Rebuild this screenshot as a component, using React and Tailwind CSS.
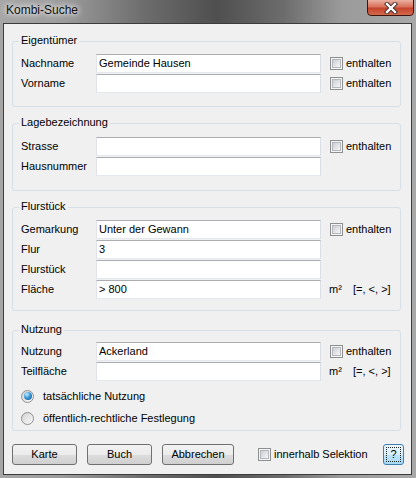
import React from 'react';

const font = "font-['Liberation_Sans',Arial,sans-serif]";

function Checkbox() {
  return (
    <span className="w-[13px] h-[13px] shrink-0 border border-[#8e8f8f] bg-[#f4f4f4] p-[1px] flex">
      <span className="flex-1 border border-[#b4b8bd] bg-gradient-to-br from-[#cbced3] to-[#f7f7f7]" />
    </span>
  );
}

function Radio({ checked }) {
  return (
    <span className="w-[13px] h-[13px] shrink-0 rounded-full border border-[#8e8f8f] bg-gradient-to-br from-[#d2d2d2] to-[#fafafa] flex items-center justify-center">
      {checked && (
        <span className="w-[8px] h-[8px] rounded-full bg-[radial-gradient(circle_at_35%_30%,#c8ecff_0%,#3a9ad9_45%,#0e4f86_100%)]" />
      )}
    </span>
  );
}

function Field({ value }) {
  return (
    <div className="w-[225px] h-[19px] shrink-0 bg-white border border-t-[#abadb3] border-l-[#e2e3ea] border-r-[#dbdfe6] border-b-[#e3e9ef] pl-[2px] leading-[17px] whitespace-nowrap">
      {value}
    </div>
  );
}

function Enthalten() {
  return (
    <div className="flex items-center ml-[9px]">
      <Checkbox />
      <span className="ml-[3px]">enthalten</span>
    </div>
  );
}

function Area() {
  return (
    <div className="flex items-center ml-[8px]">
      <span className="w-[24px]">m²</span>
      <span>[=, &lt;, &gt;]</span>
    </div>
  );
}

function Row({ label, value, extra }) {
  return (
    <div className="flex items-center h-[19px]">
      <span className="w-[75px] shrink-0">{label}</span>
      <Field value={value} />
      {extra}
    </div>
  );
}

function Group({ title, className, children }) {
  return (
    <div className={`relative w-[389px] border border-[#d5dfe5] rounded-[3px] pl-[8px] ${className}`}>
      <span className="absolute left-[6px] top-[-8px] px-[2px] bg-[#f0f0f0] leading-[13px]">{title}</span>
      {children}
    </div>
  );
}

function Button({ children, className }) {
  return (
    <div className={`h-[21px] flex items-center justify-center rounded-[3px] border border-[#707070] bg-[linear-gradient(#f2f2f2_0%,#ebebeb_50%,#dddddd_50%,#cfcfcf_100%)] ${className}`}>
      {children}
    </div>
  );
}

export default function App() {
  return (
    <div className={`w-[416px] h-[478px] flex flex-col text-[11px] text-black ${font} bg-[linear-gradient(90deg,#a6a6a6_0%,#9c9c9c_15%,#6c6c6c_35%,#4f4f4f_52%,#6c6c6c_68%,#9a9a9a_82%,#a8a8a8_100%)]`}>
      {/* title bar */}
      <div className="h-[23px] flex justify-between items-start">
        <span className="pl-[6px] pt-[3px] text-[12px] leading-[15px] text-[#111] [text-shadow:0_0_5px_#fff,0_0_8px_#fff]">Kombi-Suche</span>
        <div className="w-[47px] h-[17px] mr-[2px] mt-[-1px] rounded-b-[4px] border border-[#3d1510] bg-[linear-gradient(#eab0a2_0%,#d8705a_45%,#c4432c_55%,#d46a4c_100%)] flex items-center justify-center">
          <svg width="14" height="12" viewBox="0 0 14 12">
            <path d="M3 2 L11 10 M11 2 L3 10" stroke="#3a2a2a" strokeWidth="4.2" strokeLinecap="square" />
            <path d="M3 2 L11 10 M11 2 L3 10" stroke="#ffffff" strokeWidth="2.4" strokeLinecap="square" />
          </svg>
        </div>
      </div>

      {/* client */}
      <div className="flex-1 ml-[3px] mr-[4px] mb-[3px] border border-[#3c3c3c] bg-[#f0f0f0] pl-[8px] flex flex-col">
        <Group title="Eigentümer" className="mt-[17px] pt-[12px] pb-[13px]">
          <div className="flex flex-col gap-[1px]">
            <Row label="Nachname" value="Gemeinde Hausen" extra={<Enthalten />} />
            <Row label="Vorname" value="" extra={<Enthalten />} />
          </div>
        </Group>

        <Group title="Lagebezeichnung" className="mt-[16px] pt-[13px] pb-[14px]">
          <div className="flex flex-col gap-[1px]">
            <Row label="Strasse" value="" extra={<Enthalten />} />
            <Row label="Hausnummer" value="" />
          </div>
        </Group>

        <Group title="Flurstück" className="mt-[16px] pt-[12px] pb-[11px]">
          <div className="flex flex-col gap-[1px]">
            <Row label="Gemarkung" value="Unter der Gewann" extra={<Enthalten />} />
            <Row label="Flur" value="3" />
            <Row label="Flurstück" value="" />
            <Row label="Fläche" value="> 800" extra={<Area />} />
          </div>
        </Group>

        <Group title="Nutzung" className="mt-[19px] pt-[11px] pb-[4px]">
          <div className="flex flex-col gap-[1px]">
            <Row label="Nutzung" value="Ackerland" extra={<Enthalten />} />
            <Row label="Teilfläche" value="" extra={<Area />} />
          </div>
          <div className="flex flex-col gap-[6px] mt-[7px]">
            <div className="flex items-center h-[16px]">
              <Radio checked />
              <span className="ml-[9px]">tatsächliche Nutzung</span>
            </div>
            <div className="flex items-center h-[16px]">
              <Radio />
              <span className="ml-[9px]">öffentlich-rechtliche Festlegung</span>
            </div>
          </div>
        </Group>

        <div className="flex items-center mt-[13px] pr-[7px]">
          <Button className="w-[65px]">Karte</Button>
          <Button className="w-[65px] ml-[10px]">Buch</Button>
          <Button className="w-[72px] ml-[10px]">Abbrechen</Button>
          <div className="flex items-center ml-[24px]">
            <Checkbox />
            <span className="ml-[3px]">innerhalb Selektion</span>
          </div>
          <div className="ml-auto w-[21px] h-[21px] rounded-[3px] border border-[#3c7fb1] bg-[linear-gradient(#eaf6fd_0%,#d9f0fc_50%,#bee6fd_50%,#a7d9f5_100%)] p-[2px] flex">
            <div className="flex-1 border border-dotted border-[#222] flex items-center justify-center leading-none">?</div>
          </div>
        </div>
      </div>
    </div>
  );
}
